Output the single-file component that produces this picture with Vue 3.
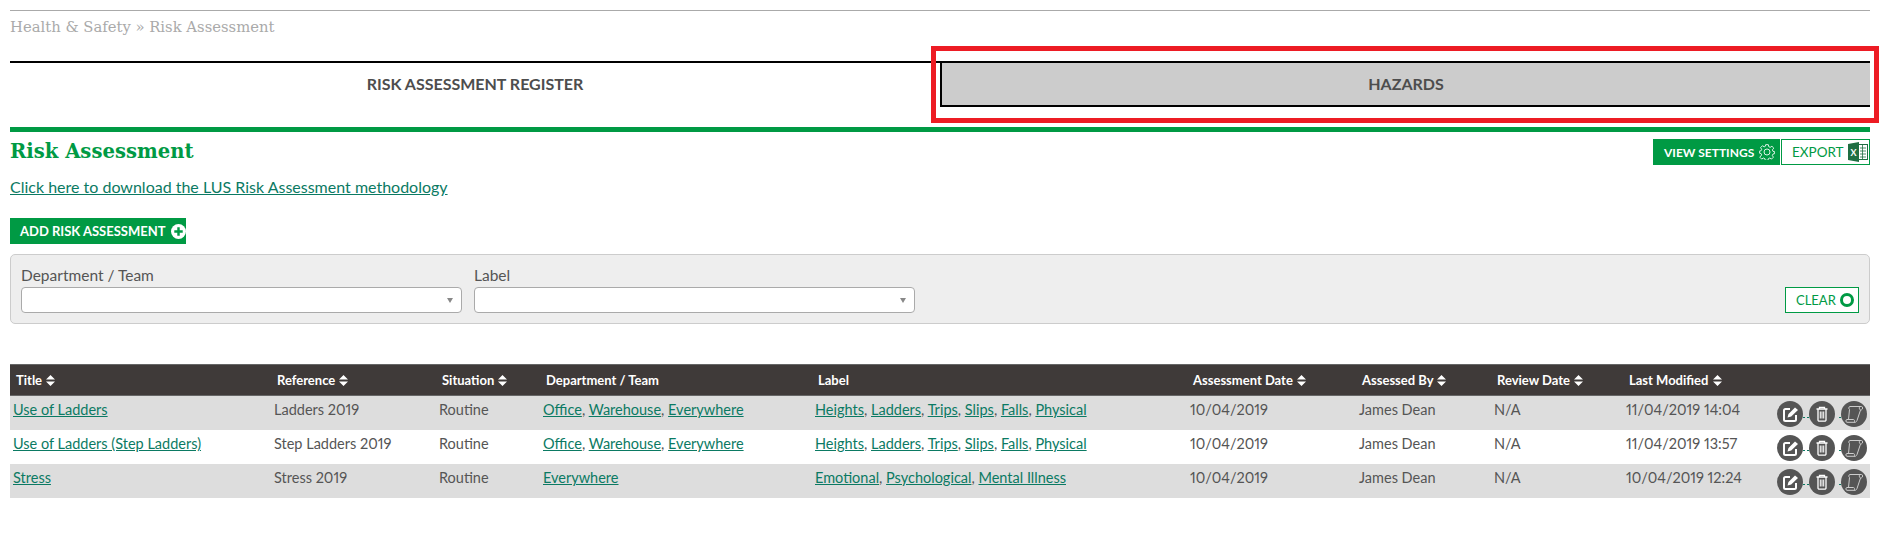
<template>
  <div class="page">
    <div class="crumbs">Health &amp; Safety » Risk Assessment</div>

    <div class="tabs">
      <a class="tab">RISK ASSESSMENT REGISTER</a>
      <a class="tab tab-active">HAZARDS</a>
      <div class="callout"></div>
    </div>

    <div class="heading">
      <h1>Risk Assessment</h1>
      <div class="heading-btns">
        <button class="btn btn-solid btn-settings">
          VIEW SETTINGS
          <svg class="ico-gear" viewBox="0 0 24 24" fill="none" stroke="#fff" stroke-width="1.3">
            <path d="M10 2h4l.6 3 2.2 1 2.600-1.600 2.800 2.800L20 9.800l1 2.200 2.500.600v2.800l-2.500.6-1 2.200 1.600 2.600-2.800 2.800-2.600-1.600-2.200 1-.6 2.500h-4l-.6-2.500-2.200-1-2.600 1.600-2.800-2.800L4 17.400l-1-2.200-2.500-.6v-2.800L3 11.200l1-2.200-1.600-2.600 2.800-2.800L7.800 5.200l1.600-.7z" transform="translate(0 -1)" />
            <circle cx="12" cy="12" r="4.500" />
          </svg>
        </button>
        <button class="btn btn-line btn-export">
          EXPORT
          <svg class="ico-xl" viewBox="0 0 20 20">
            <rect x="9" y="2.500" width="10.500" height="15" fill="#fff" stroke="#1f6e43" stroke-width="1" />
            <path d="M12 6h6M12 9h6M12 12h6M12 15h6M14.500 3v14" stroke="#1f6e43" stroke-width="0.800" />
            <path d="M0 2l11-2v20L0 18z" fill="#1f6e43" />
            <text x="5.500" y="13.500" class="xl-x">X</text>
          </svg>
        </button>
      </div>
    </div>

    <a class="method-link">Click here to download the LUS Risk Assessment methodology</a>

    <button class="btn btn-solid btn-add">
      ADD RISK ASSESSMENT
      <svg class="ico-plus" viewBox="0 0 16 16">
        <circle cx="8" cy="8" r="8" fill="#fff" />
        <path d="M8 3.500v9M3.500 8h9" stroke="#009a44" stroke-width="2.600" />
      </svg>
    </button>

    <div class="filters">
      <div class="field">
        <label>Department / Team</label>
        <div class="select"><span class="caret"></span></div>
      </div>
      <div class="field">
        <label>Label</label>
        <div class="select"><span class="caret"></span></div>
      </div>
      <button class="btn btn-line btn-clear">
        CLEAR
        <span class="ring"></span>
      </button>
    </div>

    <table class="grid">
      <colgroup>
        <col v-for="w in colWidths" :key="w.id" :style="{ width: w.px + 'px' }" />
      </colgroup>
      <thead>
        <tr>
          <th v-for="c in columns" :key="c.name">
            {{ c.name }}
            <svg v-if="c.sort" class="sort" viewBox="0 0 9 11"><path d="M4.500 0L9 4.500H0zM4.500 11L0 6.500h9z" fill="#fff" /></svg>
          </th>
          <th></th>
        </tr>
      </thead>
      <tbody>
        <tr v-for="r in rows" :key="r.title">
          <td><a>{{ r.title }}</a></td>
          <td>{{ r.ref }}</td>
          <td>Routine</td>
          <td>
            <template v-for="(d, i) in r.depts" :key="d"><a>{{ d }}</a><span v-if="i < r.depts.length - 1">, </span></template>
          </td>
          <td>
            <template v-for="(l, i) in r.labels" :key="l"><a>{{ l }}</a><span v-if="i < r.labels.length - 1">, </span></template>
          </td>
          <td>10/04/2019</td>
          <td>James Dean</td>
          <td>N/A</td>
          <td>{{ r.modified }}</td>
          <td class="actions">
            <div class="action-row">
              <span class="round">
                <svg viewBox="0 0 26 26" fill="none" stroke="#fff" stroke-width="2">
                  <path d="M13 8H8.500A1.500 1.500 0 0 0 7 9.500v9A1.500 1.500 0 0 0 8.500 20h9a1.500 1.500 0 0 0 1.500-1.500V14" />
                  <path d="M10.500 16.500l1-3.500 6.500-6.500 3 2.500-6.800 6.600z" fill="#fff" stroke="none" />
                </svg>
              </span>
              <i class="dash"></i><i class="dash dash-gap"></i>
              <span class="round">
                <svg viewBox="0 0 26 26" fill="none" stroke="#fff" stroke-width="1.300">
                  <path d="M7.500 8h11M10.500 8V6.300h5V8M9 8v11a1.200 1.200 0 0 0 1.200 1.200h5.600A1.200 1.200 0 0 0 17 19V8" />
                  <path d="M11.300 10.500v7M13 10.500v7M14.700 10.500v7" stroke-width="1" />
                </svg>
              </span>
              <i class="dash dash-solo"></i>
              <span class="round">
                <svg viewBox="0 0 26 26" fill="none" stroke="#ccc" stroke-width="1">
                  <path d="M9 5.500h11.500c1.500 0 1.500 2.800 0 3.300l-1 .3L16 19.500c-.4 1-1 1.800-2 1.800H6c-1.500 0-1.500-2.800 0-2.800h6.500c1 0 1.300 1.700.8 2.800" />
                  <path d="M9 5.500C7.500 5.500 7.500 8 8.500 8.500L7.500 18.500M19 5.500c-1 1-1 2.300.5 3.600" />
                </svg>
              </span>
            </div>
          </td>
        </tr>
      </tbody>
    </table>
  </div>
</template>

<script setup>
const columns = [
  { name: 'Title', sort: true },
  { name: 'Reference', sort: true },
  { name: 'Situation', sort: true },
  { name: 'Department / Team', sort: false },
  { name: 'Label', sort: false },
  { name: 'Assessment Date', sort: true },
  { name: 'Assessed By', sort: true },
  { name: 'Review Date', sort: true },
  { name: 'Last Modified', sort: true },
]

const colWidths = [261, 165, 104, 272, 375, 169, 135, 132, 152, 95].map((px, id) => ({ id, px }))

const rows = [
  {
    title: 'Use of Ladders',
    ref: 'Ladders 2019',
    depts: ['Office', 'Warehouse', 'Everywhere'],
    labels: ['Heights', 'Ladders', 'Trips', 'Slips', 'Falls', 'Physical'],
    modified: '11/04/2019 14:04',
  },
  {
    title: 'Use of Ladders (Step Ladders)',
    ref: 'Step Ladders 2019',
    depts: ['Office', 'Warehouse', 'Everywhere'],
    labels: ['Heights', 'Ladders', 'Trips', 'Slips', 'Falls', 'Physical'],
    modified: '11/04/2019 13:57',
  },
  {
    title: 'Stress',
    ref: 'Stress 2019',
    depts: ['Everywhere'],
    labels: ['Emotional', 'Psychological', 'Mental Illness'],
    modified: '10/04/2019 12:24',
  },
]
</script>

<style>
body {
  background: #fff;
}
</style>

<style scoped>
.page {
  width: 1860px;
  margin: 0 14px 0 10px;
  padding-top: 10px;
  font-family: Lato, "Open Sans", sans-serif;
  font-feature-settings: "pnum";
  color: #555;
}

.crumbs {
  border-top: 1px solid #aaa;
  height: 50px;
  padding-top: 7px;
  box-sizing: border-box;
  font-family: "DejaVu Serif", serif;
  font-size: 14.800px;
  color: #aaa;
}

.tabs {
  position: relative;
  display: grid;
  grid-template-columns: 930px 930px;
  height: 46px;
  margin-top: 1px;
}

.tab {
  display: flex;
  align-items: center;
  justify-content: center;
  padding-bottom: 4px;
  border-top: 2px solid #000;
  font-size: 16px;
  font-weight: 700;
  color: #4d4d4d;
}

.tab-active {
  padding-bottom: 2px;
  background: #ccc;
  border-left: 2px solid #000;
  border-bottom: 2px solid #000;
}

.callout {
  position: absolute;
  left: 921px;
  top: -15px;
  width: 948px;
  height: 77px;
  box-sizing: border-box;
  border: 5px solid #ed1c24;
}

.heading {
  display: flex;
  justify-content: space-between;
  margin-top: 20px;
  border-top: 5px solid #009a44;
  height: 46px;
  padding-top: 7px;
  box-sizing: border-box;
}

h1 {
  margin: 0;
  font-family: "DejaVu Serif", serif;
  font-size: 19.600px;
  font-weight: 700;
  color: #009a44;
  line-height: 26px;
}

.heading-btns {
  display: flex;
  gap: 1px;
}

.btn {
  display: inline-flex;
  align-items: center;
  height: 26px;
  padding: 0;
  box-sizing: border-box;
  border: 0;
  font-family: inherit;
  font-size: 12px;
  white-space: nowrap;
}

.btn-solid {
  background: #009a44;
  color: #fff;
  font-weight: 700;
}

.btn-line {
  background: #fff;
  border: 1px solid #009a44;
  color: #009a44;
}

.btn-settings {
  width: 127px;
  padding-left: 11px;
}

.ico-gear {
  width: 16px;
  height: 16px;
  margin-left: 5px;
}

.btn-export {
  width: 89px;
  padding-left: 10px;
  font-size: 13.500px;
}

.ico-xl {
  width: 20px;
  height: 20px;
  margin-left: 4px;
}

.xl-x {
  fill: #fff;
  font-size: 9px;
  font-weight: 700;
  text-anchor: middle;
}

.method-link {
  display: block;
  margin-top: 4px;
  font-size: 16px;
  line-height: 20px;
  color: #0b7a63;
  text-decoration: underline;
}

.btn-add {
  display: flex;
  width: 176px;
  margin-top: 21px;
  padding-left: 10px;
  font-size: 13px;
}

.ico-plus {
  width: 15px;
  height: 15px;
  margin-left: 5px;
}

.filters {
  display: flex;
  align-items: flex-end;
  gap: 12px;
  height: 70px;
  margin-top: 10px;
  padding: 0 10px 10px 10px;
  box-sizing: border-box;
  background: #eee;
  border: 1px solid #ccc;
  border-radius: 5px;
}

.field {
  width: 441px;
}

.field label {
  display: block;
  font-size: 15.500px;
  line-height: 24px;
  color: #555;
}

.select {
  position: relative;
  height: 26px;
  box-sizing: border-box;
  background: #fff;
  border: 1px solid #aaa;
  border-radius: 4px;
}

.caret {
  position: absolute;
  right: 8px;
  top: 10px;
  border-left: 3.500px solid transparent;
  border-right: 3.500px solid transparent;
  border-top: 5px solid #888;
}

.btn-clear {
  width: 74px;
  margin-left: auto;
  padding-left: 10px;
  font-size: 13px;
}

.ring {
  width: 14px;
  height: 14px;
  margin-left: 4px;
  box-sizing: border-box;
  border: 3px solid #009a44;
  border-radius: 50%;
}

.grid {
  width: 1860px;
  margin-top: 40px;
  table-layout: fixed;
  border-collapse: collapse;
}

.grid th {
  height: 31px;
  padding: 0 0 1px 6px;
  box-sizing: border-box;
  background: #3f3a39;
  border-top: 1px solid #666;
  border-bottom: 1px solid #666;
  color: #fff;
  font-size: 13px;
  font-weight: 700;
  text-align: left;
  white-space: nowrap;
}

.sort {
  width: 9px;
  height: 11px;
  margin-left: 1px;
  vertical-align: -1px;
}

.grid td {
  height: 34px;
  padding: 5px 0 0 3px;
  box-sizing: border-box;
  font-size: 14.500px;
  line-height: 18px;
  vertical-align: top;
  white-space: nowrap;
  color: #555;
}

.grid tbody tr:nth-child(odd) td {
  background: #ddd;
}

.grid a {
  color: #0b7a63;
  text-decoration: underline;
}

.grid td.actions {
  padding: 5px 0 0 2px;
}

.action-row {
  display: flex;
  align-items: center;
}

.round {
  flex: none;
  width: 26px;
  height: 26px;
  background: #555;
  border-radius: 50%;
}

.round svg {
  display: block;
  width: 26px;
  height: 26px;
}

.dash {
  flex: none;
  width: 2px;
  height: 1px;
  margin-top: 6px;
  background: #0b7a63;
}

.dash-gap {
  margin-left: 2px;
}

.dash-solo {
  margin-left: 4px;
}
</style>
